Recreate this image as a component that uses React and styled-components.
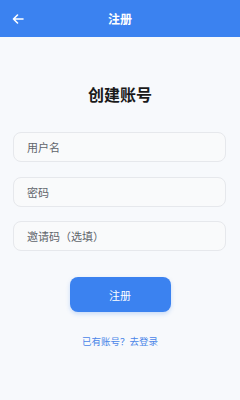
import React from "react";
import styled, { createGlobalStyle } from "styled-components";

const GlobalStyle = createGlobalStyle`
  html, body { margin: 0; padding: 0; }
  body {
    background: #f7f9fc;
    font-family: "Noto Sans CJK SC", "Noto Sans", sans-serif;
  }
`;

const Page = styled.div`
  width: 240px;
  height: 400px;
  background: #f7f9fc;
  display: flex;
  flex-direction: column;
`;

const Header = styled.div`
  height: 37px;
  background: #3b82f0;
  display: grid;
  grid-template-columns: 37px 1fr 37px;
  align-items: center;
`;

const BackButton = styled.div`
  display: flex;
  align-items: center;
  justify-content: center;
  padding-right: 1px;
`;

const HeaderTitle = styled.div`
  text-align: center;
  color: #ffffff;
  font-size: 12px;
  font-weight: 700;
`;

const Body = styled.div`
  display: flex;
  flex-direction: column;
  align-items: center;
  padding: 46px 13px 0 13px;
`;

const Title = styled.h1`
  margin: 0;
  font-size: 16px;
  line-height: 22px;
  font-weight: 700;
  color: #1a1a1a;
`;

const Form = styled.div`
  width: 100%;
  display: flex;
  flex-direction: column;
  gap: 14.5px;
  margin-top: 27px;
`;

const Field = styled.div`
  box-sizing: border-box;
  width: 213px;
  height: 30px;
  border: 1px solid #e6e8ec;
  border-radius: 8px;
  background: #f9fafb;
  display: flex;
  align-items: center;
  padding-left: 13px;
  font-size: 11px;
  color: #60656b;
`;

const Submit = styled.div`
  margin-top: 26px;
  width: 101px;
  height: 35px;
  border-radius: 8px;
  background: #3b82f0;
  box-shadow: 0 2px 4px rgba(59, 130, 240, 0.25);
  color: #ffffff;
  font-size: 11px;
  display: flex;
  align-items: center;
  justify-content: center;
`;

const LoginLink = styled.div`
  margin-top: 22px;
  font-size: 9.5px;
  color: #4a86e8;
`;

function App() {
  return (
    <Page>
      <GlobalStyle />
      <Header>
        <BackButton>
          <svg width="12" height="10" viewBox="0 0 12 10" fill="none">
            <path d="M11 5H1.5M5.5 1L1.5 5l4 4" stroke="#fff" strokeWidth="1.6" strokeLinecap="round" strokeLinejoin="round" />
          </svg>
        </BackButton>
        <HeaderTitle>注册</HeaderTitle>
        <div />
      </Header>
      <Body>
        <Title>创建账号</Title>
        <Form>
          <Field>用户名</Field>
          <Field>密码</Field>
          <Field>邀请码（选填）</Field>
        </Form>
        <Submit>注册</Submit>
        <LoginLink>已有账号？去登录</LoginLink>
      </Body>
    </Page>
  );
}

export default App;
